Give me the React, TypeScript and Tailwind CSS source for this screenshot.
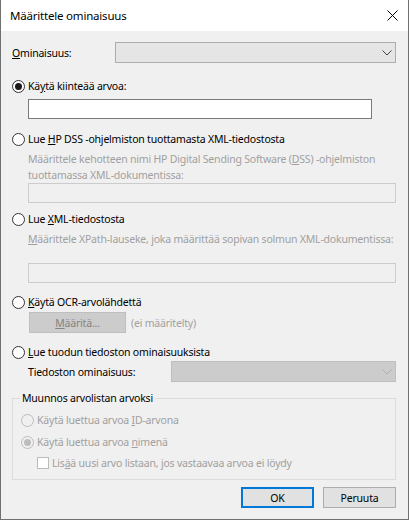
import React from "react";

function Radio({ checked, disabled }: { checked?: boolean; disabled?: boolean }) {
  return (
    <span
      className={
        disabled
          ? "flex h-[13px] w-[13px] shrink-0 items-center justify-center rounded-full border border-[#bcbcbc] bg-[#f0f0f0]"
          : "flex h-[13px] w-[13px] shrink-0 items-center justify-center rounded-full border border-[#333333] bg-white"
      }
    >
      {checked && (
        <span
          className={
            disabled
              ? "h-[7px] w-[7px] rounded-full bg-[#bcbcbc]"
              : "h-[7px] w-[7px] rounded-full bg-[#1a1a1a]"
          }
        />
      )}
    </span>
  );
}

function Chevron({ color }: { color: string }) {
  return (
    <svg width="10" height="6" viewBox="0 0 10 6" className="shrink-0">
      <polyline points="0.5,0.5 5,5 9.5,0.5" fill="none" stroke={color} strokeWidth="1" />
    </svg>
  );
}

export default function App() {
  return (
    <div className="flex h-[520px] w-[409px] flex-col overflow-hidden border-x border-b border-[#707070] bg-[#f0f0f0] font-['Noto_Sans',sans-serif] text-[10.5px] leading-[16px] tracking-[-0.2px] text-black">
      {/* Title bar */}
      <div className="flex h-[31px] shrink-0 items-center justify-between bg-white pl-[9px] pr-[10px]">
        <span className="text-[11.5px]">Määrittele ominaisuus</span>
        <svg width="11" height="11" viewBox="0 0 11 11">
          <line x1="0.5" y1="0.5" x2="10.5" y2="10.5" stroke="#000" strokeWidth="1" />
          <line x1="10.5" y1="0.5" x2="0.5" y2="10.5" stroke="#000" strokeWidth="1" />
        </svg>
      </div>

      <div className="flex flex-col pl-[11px] pr-[12px]">
        {/* Ominaisuus row */}
        <div className="mt-[11px] flex h-[21px] items-center">
          <span className="w-[103px] shrink-0">
            <u>O</u>minaisuus:
          </span>
          <div className="flex h-[21px] flex-1 items-center justify-end border border-[#adadad] bg-[#e5e5e5] pr-[3px]">
            <Chevron color="#444444" />
          </div>
        </div>

        {/* Radio 1 */}
        <div className="mt-[15px] flex h-[16px] items-center gap-[3px]">
          <Radio checked />
          <span>
            Kä<u>y</u>tä kiinteää arvoa:
          </span>
        </div>
        <div className="ml-[16px] mt-[5px] h-[20px] w-[344px] border border-[#7a7a7a] bg-white" />

        {/* Radio 2 */}
        <div className="mt-[12px] flex h-[16px] items-center gap-[3px]">
          <Radio />
          <span>
            Lue <u>H</u>P DSS -ohjelmiston tuottamasta XML-tiedostosta
          </span>
        </div>
        <div className="ml-[16px] mt-[4px] whitespace-nowrap text-[#a0a0a0]">
          Määrittele kehotteen nimi HP Digital Sending Software (<u>D</u>SS) -ohjelmiston
          <br />
          tuottamassa XML-dokumentissa:
        </div>
        <div className="ml-[16px] h-[20px] border border-[#cccccc] bg-[#f0f0f0]" />

        {/* Radio 3 */}
        <div className="mt-[8px] flex h-[16px] items-center gap-[3px]">
          <Radio />
          <span>
            Lue <u>X</u>ML-tiedostosta
          </span>
        </div>
        <div className="ml-[16px] mt-[4px] whitespace-nowrap text-[#a0a0a0]">
          <u>M</u>äärittele XPath-lauseke, joka määrittää sopivan solmun XML-dokumentissa:
        </div>
        <div className="ml-[16px] mt-[16px] h-[20px] border border-[#cccccc] bg-[#f0f0f0]" />

        {/* Radio 4 */}
        <div className="mt-[11px] flex h-[16px] items-center gap-[3px]">
          <Radio />
          <span>
            <u>K</u>äytä OCR-arvolähdettä
          </span>
        </div>
        <div className="ml-[17px] mt-[2px] flex h-[21px] items-center gap-[5px]">
          <div className="flex h-[21px] w-[97px] items-center justify-center border border-[#bfbfbf] bg-[#cccccc] text-[#838383]">
            <span>
              <u>M</u>ääritä...
            </span>
          </div>
          <span className="text-[#a0a0a0]">(ei määritelty)</span>
        </div>

        {/* Radio 5 */}
        <div className="mt-[11px] flex h-[16px] items-center gap-[3px]">
          <Radio />
          <span>
            <u>L</u>ue tuodun tiedoston ominaisuuksista
          </span>
        </div>
        <div className="ml-[16px] mt-[1px] flex h-[21px] items-center">
          <span className="w-[143px] shrink-0">Tiedoston ominaisuus:</span>
          <div className="flex h-[21px] flex-1 items-center justify-end border border-[#bfbfbf] bg-[#cccccc] pr-[3px]">
            <Chevron color="#b0b0b0" />
          </div>
        </div>

        {/* Group box */}
        <div className="relative mt-[16px] flex h-[82px] flex-col border border-[#dcdcdc] pl-[8px]">
          <span className="absolute left-[7px] top-[-9px] bg-[#f0f0f0] px-[2px]">
            Muunnos arvolistan arvoksi
          </span>
          <div className="mt-[13px] flex h-[16px] items-center gap-[3px] text-[#a0a0a0]">
            <Radio disabled />
            <span>
              Käytä luettua arvoa <u>I</u>D-arvona
            </span>
          </div>
          <div className="mt-[6px] flex h-[16px] items-center gap-[3px] text-[#a0a0a0]">
            <Radio checked disabled />
            <span>
              Käytä luettua arvoa <u>n</u>imenä
            </span>
          </div>
          <div className="ml-[16px] mt-[5px] flex h-[16px] items-center gap-[3px] text-[#a0a0a0]">
            <span className="h-[12px] w-[12px] shrink-0 border border-[#bcbcbc] bg-white" />
            <span>
              Lis<u>ä</u>ä uusi arvo listaan, jos vastaavaa arvoa ei löydy
            </span>
          </div>
        </div>

        {/* Buttons */}
        <div className="mt-[7px] flex justify-end gap-[9px]">
          <div className="flex h-[21px] w-[73px] items-center justify-center border-2 border-[#0078d7] bg-[#e1e1e1]">
            OK
          </div>
          <div className="flex h-[21px] w-[73px] items-center justify-center border border-[#adadad] bg-[#e1e1e1]">
            Peruuta
          </div>
        </div>
      </div>
    </div>
  );
}
